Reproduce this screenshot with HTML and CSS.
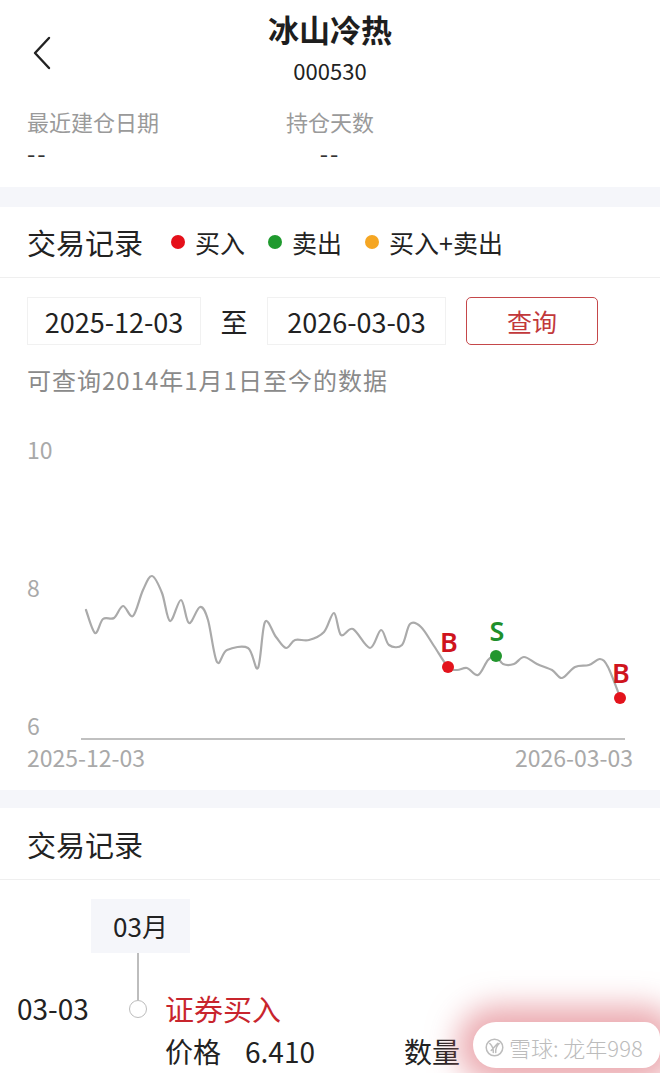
FILE: index.html
```html
<!DOCTYPE html>
<html lang="zh-CN">
<head>
<meta charset="utf-8">
<title>冰山冷热</title>
<link rel="stylesheet" href="styles.css">
</head>
<body>
<div class="page">
  <header class="nav">
    <button class="back" aria-label="返回">
      <svg width="20" height="34" viewBox="0 0 20 34"><path d="M16 2 L2 17 L16 32" fill="none" stroke="#222" stroke-width="2.4" stroke-linecap="round" stroke-linejoin="round"/></svg>
    </button>
    <div class="title-wrap">
      <h1 class="title">冰山冷热</h1>
      <div class="code">000530</div>
    </div>
    <div class="nav-spacer"></div>
  </header>

  <section class="stats">
    <div class="stat">
      <div class="stat-label">最近建仓日期</div>
      <div class="stat-value">--</div>
    </div>
    <div class="stat stat-center">
      <div class="stat-label">持仓天数</div>
      <div class="stat-value">--</div>
    </div>
  </section>

  <div class="band"></div>

  <section class="legend-bar">
    <h2 class="section-title">交易记录</h2>
    <ul class="legend">
      <li><span class="dot dot-buy"></span>买入</li>
      <li><span class="dot dot-sell"></span>卖出</li>
      <li><span class="dot dot-both"></span>买入+卖出</li>
    </ul>
  </section>

  <section class="query">
    <div class="query-row">
      <div class="date-box">2025-12-03</div>
      <span class="to">至</span>
      <div class="date-box date-box-wide">2026-03-03</div>
      <button class="query-btn">查询</button>
    </div>
    <p class="hint">可查询2014年1月1日至今的数据</p>
  </section>

  <div class="chart">
    <svg width="660" height="395" viewBox="0 395 660 395">
      <g class="axis-text">
        <text x="27" y="459">10</text>
        <text x="27" y="597">8</text>
        <text x="27" y="735">6</text>
        <text x="27" y="767">2025-12-03</text>
        <text x="633" y="767" text-anchor="end">2026-03-03</text>
      </g>
      <line x1="81" y1="739" x2="625" y2="739" stroke="#ababab" stroke-width="1.5"/>
      <path id="priceLine" d="" fill="none" stroke="#aaaaaa" stroke-width="2.2" stroke-linecap="round" stroke-linejoin="round"/>
      <circle cx="448" cy="667" r="6" fill="#e3131c"/>
      <text class="mark mark-b" x="449" y="652" text-anchor="middle">B</text>
      <circle cx="496" cy="656" r="6" fill="#22962e"/>
      <text class="mark mark-s" x="497" y="641" text-anchor="middle">S</text>
      <circle cx="620" cy="698" r="6" fill="#e3131c"/>
      <text class="mark mark-b" x="621" y="683" text-anchor="middle">B</text>
    </svg>
  </div>

  <div class="band band-thin"></div>

  <section class="records-head">
    <h2 class="section-title">交易记录</h2>
  </section>

  <section class="timeline">
    <div class="month-tag">03月</div>
    <div class="connector"></div>
    <div class="record">
      <div class="record-date">03-03</div>
      <div class="record-node"></div>
      <div class="record-type">证券买入</div>
      <div class="record-detail">
        <span class="field"><span>价格</span><span class="field-value">6.410</span></span>
        <span class="field"><span>数量</span></span>
      </div>
    </div>
  </section>

  <div class="watermark">
    <svg class="wm-logo" width="19" height="19" viewBox="0 0 19 19"><circle cx="9.5" cy="9.5" r="8.3" fill="none" stroke="#bdbdbd" stroke-width="1.5"/><path d="M4.8 5.5 C7.5 8 8.5 11 8.3 14.5 M14.2 5.5 C11.5 8 10.5 11 10.7 14.5 M6.2 12.5 L12.8 5.2" fill="none" stroke="#bdbdbd" stroke-width="1.5" stroke-linecap="round"/></svg>
    <span class="wm-text">雪球: 龙年998</span>
  </div>
</div>
<script src="chart.js"></script>
</body>
</html>
```

FILE: styles.css
```css
* { box-sizing: border-box; }
html, body { margin: 0; padding: 0; }
html { overflow: hidden; }
body {
  background: #ffffff;
  color: #222222;
  font-family: "Noto Sans CJK SC", "Noto Sans", sans-serif;
  width: 660px;
}
.page { position: relative; width: 660px; min-height: 1073px; }

.nav {
  display: grid;
  grid-template-columns: 80px 1fr 80px;
  padding-top: 9px;
}
.back {
  border: 0;
  background: none;
  padding: 0 0 0 33px;
  margin-top: 27px;
  align-self: start;
  justify-self: start;
  height: 34px;
  display: block;
}
.back svg { display: block; }
.title-wrap { text-align: center; }
.title {
  margin: 0;
  font-size: 31px;
  font-weight: 700;
  line-height: 40px;
  color: #1e1e1e;
}
.code {
  margin-top: 7px;
  font-size: 22px;
  line-height: 28px;
  color: #222;
}

.stats {
  display: grid;
  grid-template-columns: 259px auto;
  justify-content: start;
  padding: 22px 0 19px 27px;
}
.stat { display: flex; flex-direction: column; align-items: flex-start; }
.stat-center { align-items: center; }
.stat-label { font-size: 22px; line-height: 30px; color: #9a9a9a; }
.stat-value { font-size: 24px; line-height: 30px; margin-top: 2px; color: #333; letter-spacing: 2px; }

.band { height: 20px; background: #f5f6fa; }
.band-thin { height: 18px; }

.legend-bar {
  height: 71px;
  display: flex;
  align-items: center;
  padding-left: 27px;
  border-bottom: 1px solid #efefef;
}
.section-title {
  margin: 0;
  font-size: 29px;
  font-weight: 400;
  line-height: 36px;
  color: #222;
}
.legend {
  list-style: none;
  margin: 0 0 0 28px;
  padding: 0;
  display: flex;
  gap: 23px;
}
.legend li {
  display: flex;
  align-items: center;
  gap: 10px;
  font-size: 25px;
  line-height: 32px;
  color: #222;
}
.dot { width: 14px; height: 14px; border-radius: 50%; display: inline-block; }
.dot-buy { background: #e5101a; }
.dot-sell { background: #1f9a2e; }
.dot-both { background: #f5a623; }

.query { padding: 19px 0 0 27px; }
.query-row { display: flex; align-items: center; }
.date-box {
  width: 174px;
  height: 48px;
  border: 1px solid #f1f1f1;
  display: flex;
  align-items: center;
  justify-content: center;
  font-size: 27px;
  color: #222;
}
.date-box-wide { width: 179px; }
.to {
  width: 66px;
  text-align: center;
  font-size: 27px;
  color: #222;
}
.query-btn {
  margin-left: 20px;
  width: 132px;
  height: 48px;
  border: 1.5px solid #c5474a;
  border-radius: 5px;
  background: #fff;
  color: #c2383b;
  font-family: inherit;
  font-size: 25px;
  padding: 0;
}
.hint {
  margin: 20px 0 0;
  font-size: 24px;
  line-height: 30px;
  letter-spacing: 1px;
  color: #8a8a8a;
}

.chart svg { display: block; }
.axis-text text {
  font-family: "Noto Sans CJK SC", "Noto Sans", sans-serif;
  font-size: 23px;
  fill: #a9a9a9;
}
.mark {
  font-family: "Noto Sans", "DejaVu Sans", sans-serif;
  font-size: 27px;
  font-weight: 600;
}
.mark-b { fill: #cf141d; }
.mark-s { fill: #1e8f2b; }

.records-head {
  height: 72px;
  display: flex;
  align-items: center;
  padding-left: 27px;
  border-bottom: 1px solid #efefef;
}

.timeline { padding-top: 19px; }
.month-tag {
  margin-left: 91px;
  width: 99px;
  height: 54px;
  background: #f5f6fa;
  text-align: center;
  line-height: 54px;
  font-size: 26px;
  color: #222;
}
.connector {
  margin-left: 137px;
  width: 1.5px;
  height: 47px;
  background: #bdbdbd;
}
.record {
  display: grid;
  grid-template-columns: 112px 18px 1fr;
  grid-template-rows: 18px auto;
  padding-left: 17px;
}
.record-date {
  font-size: 28px;
  line-height: 16px;
  color: #222;
}
.record-node {
  width: 18px;
  height: 18px;
  border: 1.5px solid #bcbcbc;
  border-radius: 50%;
  background: #fff;
}
.record-type {
  margin-left: 18px;
  font-size: 29px;
  line-height: 16px;
  color: #c8252d;
}
.record-detail {
  grid-column: 3;
  margin: 24px 0 0 18px;
  display: flex;
  font-size: 28px;
  line-height: 18px;
  color: #222;
}
.field { display: flex; }
.field:first-child { width: 239px; }
.field-value { margin-left: 24px; }

.watermark {
  position: absolute;
  left: 473px;
  top: 1022px;
  width: 187px;
  height: 46px;
  background: #ffffff;
  border-radius: 24px 16px 18px 24px;
  box-shadow: 0 0 30px 16px rgba(222, 118, 128, 0.62);
  display: flex;
  align-items: flex-start;
  padding: 12px 0 0 12px;
  gap: 5px;
}
.wm-logo { margin-top: 4px; flex: none; }
.wm-text {
  font-size: 22px;
  line-height: 26px;
  color: #bcbcbc;
  font-weight: 300;
  white-space: nowrap;
}
```

FILE: chart.js
```js
(function () {
  var pts = [
    [86,610],[95,633],[103,619],[114,618],[123,606],[133,616],[143,590],[152,576],
    [162,593],[170,621],[181,600],[189,623],[200,607],[208,620],[217,662],[227,650],
    [248,648],[258,668],[265,622],[276,637],[286,648],[295,640],[309,640],[324,632],
    [334,613],[341,635],[353,629],[370,648],[381,630],[389,645],[402,645],[410,624],
    [421,627],[434,646],[448,667],[457,670],[467,668],[478,675],[488,660],[496,656],
    [503,664],[514,664],[524,657],[537,664],[552,670],[562,678],[575,667],[589,665],
    [600,659],[608,667],[620,697]
  ];
  var d = 'M' + pts[0][0] + ' ' + pts[0][1];
  for (var i = 0; i < pts.length - 1; i++) {
    var p0 = pts[i - 1] || pts[i], p1 = pts[i], p2 = pts[i + 1], p3 = pts[i + 2] || p2;
    var c1x = p1[0] + (p2[0] - p0[0]) / 6, c1y = p1[1] + (p2[1] - p0[1]) / 6;
    var c2x = p2[0] - (p3[0] - p1[0]) / 6, c2y = p2[1] - (p3[1] - p1[1]) / 6;
    d += ' C' + c1x.toFixed(1) + ' ' + c1y.toFixed(1) + ' ' + c2x.toFixed(1) + ' ' + c2y.toFixed(1) + ' ' + p2[0] + ' ' + p2[1];
  }
  document.getElementById('priceLine').setAttribute('d', d);
})();
```
